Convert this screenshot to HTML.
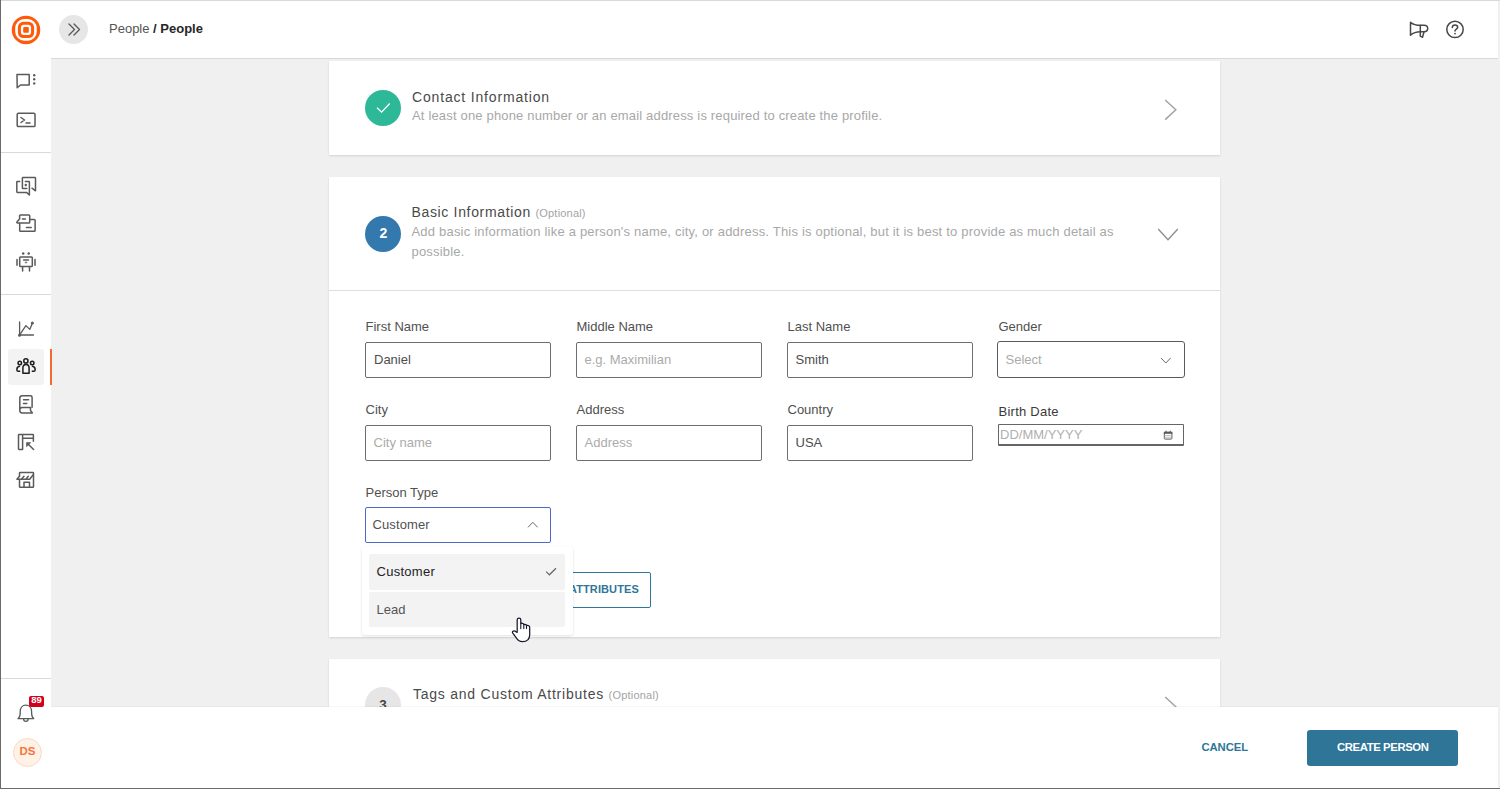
<!DOCTYPE html>
<html><head><meta charset="utf-8">
<style>
*{box-sizing:border-box;margin:0;padding:0}
html,body{width:1500px;height:789px;overflow:hidden;background:#f0f0f0;font-family:"Liberation Sans",sans-serif;position:relative}
.a{position:absolute}
.t{position:absolute;white-space:nowrap;line-height:1}
svg{position:absolute;overflow:visible}
.card{position:absolute;left:329px;width:891px;background:#fff;box-shadow:0 1px 2px rgba(0,0,0,.13)}
.lbl{position:absolute;white-space:nowrap;line-height:1;font-size:13px;color:#505050}
.inp{position:absolute;width:186px;height:36px;border:1px solid #6e6e6e;border-radius:2px;background:#fff}
.val{position:absolute;white-space:nowrap;line-height:1;font-size:13px;color:#4d4d4d}
.ph{position:absolute;white-space:nowrap;line-height:1;font-size:13px;color:#ababab}
</style></head>
<body>
<!-- header -->
<div class="a" style="left:0;top:0;width:1500px;height:58px;background:#fff"></div>
<div class="a" style="left:51px;top:58px;width:1449px;height:1px;background:#d9d8d6"></div>
<div class="a" style="left:59px;top:15px;width:29px;height:29px;border-radius:50%;background:#e6e6e6"></div>
<svg width="1500" height="60" style="left:0;top:0">
 <g fill="none" stroke="#555" stroke-width="1.3" stroke-linecap="round" stroke-linejoin="round">
  <path d="M69 24 L74.5 29.5 L69 35"/><path d="M74 24 L79.5 29.5 L74 35"/>
 </g>
 <g fill="none" stroke="#484848" stroke-width="1.5" stroke-linecap="round" stroke-linejoin="round">
  <path d="M1410.5 22.3 C1413 24.3 1416 25.3 1420.5 25.3 L1424 25.3 C1426.5 25.3 1427.7 26.9 1427.7 28.5 C1427.7 30.1 1426.5 31.7 1424 31.7 L1420.5 31.7 C1416 31.7 1413 32.9 1410.5 35.2 Z"/>
  <path d="M1420.3 25.5 L1420.3 36.2 L1422.5 37.3 L1423.9 32.2"/>
  <circle cx="1455" cy="29.4" r="8.2"/>
  <path d="M1452.3 27.6 C1452.3 26 1453.5 25 1455 25 C1456.6 25 1457.7 26 1457.7 27.3 C1457.7 29 1455 29.2 1455 31"/>
 </g>
 <circle cx="1455" cy="33.6" r="0.9" fill="#484848"/>
</svg>
<div class="t" style="left:109px;top:21.5px;font-size:13px;color:#555">People <b style="color:#262626">/ People</b></div>

<!-- cards -->
<div class="card" style="top:61px;height:94px"></div>
<div class="a" style="left:365px;top:90px;width:36px;height:36px;border-radius:50%;background:#2db897"></div>
<svg width="40" height="40" style="left:365px;top:90px"><path d="M12 17.7 L16.6 22.1 L24.7 13.5" fill="none" stroke="#fff" stroke-width="1.3"/></svg>
<div class="t" style="left:412px;top:90px;font-size:14px;letter-spacing:0.83px;color:#4a4a4a">Contact Information</div>
<div class="t" style="left:412px;top:109px;font-size:13px;letter-spacing:0.17px;color:#a8a8a8">At least one phone number or an email address is required to create the profile.</div>
<svg width="20" height="24" style="left:1160px;top:96px"><path d="M5.2 4 L15.8 13.8 L5.2 23.6" fill="none" stroke="#a3a3a3" stroke-width="1.5"/></svg>

<div class="card" style="top:177px;height:460px"></div>
<div class="a" style="left:365px;top:216px;width:36px;height:36px;border-radius:50%;background:#3479ae"></div>
<div class="t" style="left:365.3px;top:226.2px;width:36px;text-align:center;font-size:14px;font-weight:bold;color:#fff">2</div>
<div class="t" style="left:411.5px;top:205.2px;font-size:14px;letter-spacing:0.66px;color:#4a4a4a">Basic Information <span style="font-size:11px;letter-spacing:0.2px;color:#a3a3a3">(Optional)</span></div>
<div class="t" style="left:411.5px;top:225px;font-size:13px;letter-spacing:0.2px;color:#a8a8a8">Add basic information like a person's name, city, or address. This is optional, but it is best to provide as much detail as</div>
<div class="t" style="left:411.5px;top:245px;font-size:13px;letter-spacing:0.2px;color:#a8a8a8">possible.</div>
<svg width="30" height="20" style="left:1155px;top:225px"><path d="M3.2 4 L13 14.8 L22.8 4" fill="none" stroke="#8f8f8f" stroke-width="1.4"/></svg>
<div class="a" style="left:329px;top:290px;width:891px;height:1px;background:#dedede"></div>

<!-- row 1 -->
<div class="lbl" style="left:365.5px;top:319.6px">First Name</div>
<div class="inp" style="left:365px;top:342px"></div>
<div class="val" style="left:374px;top:352.7px">Daniel</div>
<div class="lbl" style="left:576.5px;top:319.6px">Middle Name</div>
<div class="inp" style="left:576px;top:342px"></div>
<div class="ph" style="left:584.5px;top:352.7px">e.g. Maximilian</div>
<div class="lbl" style="left:787.5px;top:319.6px">Last Name</div>
<div class="inp" style="left:787px;top:342px"></div>
<div class="val" style="left:795.5px;top:352.7px">Smith</div>
<div class="lbl" style="left:998.5px;top:319.6px">Gender</div>
<div class="inp" style="left:997px;top:341px;width:188px;height:37px;border-radius:3px;border-color:#5a5a5a"></div>
<div class="ph" style="left:1005.5px;top:353px">Select</div>
<svg width="20" height="12" style="left:1158px;top:355px"><path d="M3 3 L7.8 8 L12.6 3" fill="none" stroke="#666" stroke-width="1"/></svg>

<!-- row 2 -->
<div class="lbl" style="left:365.5px;top:403.2px">City</div>
<div class="inp" style="left:365px;top:425px"></div>
<div class="ph" style="left:373.5px;top:435.9px">City name</div>
<div class="lbl" style="left:576.5px;top:403.2px">Address</div>
<div class="inp" style="left:576px;top:425px"></div>
<div class="ph" style="left:584.5px;top:435.9px">Address</div>
<div class="lbl" style="left:787.5px;top:403.2px">Country</div>
<div class="inp" style="left:787px;top:425px"></div>
<div class="val" style="left:795.5px;top:435.9px">USA</div>
<div class="lbl" style="left:998.5px;top:404.5px;color:#3a3a3a;letter-spacing:0.25px">Birth Date</div>
<div class="a" style="left:998px;top:424px;width:186px;height:22px;border:1px solid #666;border-bottom-width:2px;border-radius:1px;background:#fff"></div>
<div class="ph" style="left:1000px;top:428.3px;color:#b0b0b0">DD/MM/YYYY</div>
<svg width="12" height="12" style="left:1163px;top:430px"><rect x="1.3" y="2.3" width="7.6" height="6.8" rx="0.8" fill="none" stroke="#5a5a5a" stroke-width="1"/><rect x="0.8" y="1.8" width="8.6" height="2" fill="#5a5a5a"/><path d="M3 0.8 V2.2 M7.2 0.8 V2.2" stroke="#5a5a5a" stroke-width="1.1"/><path d="M1.5 5.6 H8.7 M1.5 7.3 H8.7" stroke="#aaa" stroke-width="0.7"/></svg>

<!-- person type -->
<div class="lbl" style="left:365.5px;top:485.7px">Person Type</div>
<div class="a" style="left:365px;top:507px;width:186px;height:36px;border:1px solid #4d68c9;border-radius:2px;background:#fff"></div>
<div class="val" style="left:372.5px;top:517.9px;color:#525252;letter-spacing:0.1px">Customer</div>
<svg width="16" height="10" style="left:525px;top:519px"><path d="M3 8.3 L7.8 3.3 L12.6 8.3" fill="none" stroke="#666" stroke-width="1"/></svg>

<!-- add attributes button -->
<div class="a" style="left:365px;top:572px;width:286px;height:36px;border:1px solid #2f7699;border-radius:2px"></div>
<div class="t" style="left:569px;top:584px;font-size:11px;font-weight:bold;letter-spacing:0.1px;color:#2f7699">ATTRIBUTES</div>

<!-- dropdown -->
<div class="a" style="left:362px;top:547px;width:211px;height:88px;background:#fff;border-radius:3px;box-shadow:0 1px 3px rgba(0,0,0,.12)"></div>
<div class="a" style="left:369px;top:554px;width:196px;height:36px;background:#f3f3f3;border-radius:2px"></div>
<div class="a" style="left:369px;top:592px;width:196px;height:35px;background:#f3f3f3;border-radius:2px"></div>
<div class="t" style="left:376.5px;top:565.2px;font-size:13px;letter-spacing:0.28px;color:#222">Customer</div>
<svg width="14" height="10" style="left:545px;top:567px"><path d="M1.2 4.6 L4.4 7.8 L11 1.3" fill="none" stroke="#666" stroke-width="1.2"/></svg>
<div class="t" style="left:376.5px;top:603.2px;font-size:13px;color:#555">Lead</div>

<!-- card 3 -->
<div class="card" style="top:659px;height:80px"></div>
<div class="a" style="left:365px;top:687px;width:36px;height:36px;border-radius:50%;background:#e6e6e6"></div>
<div class="t" style="left:365px;top:697.5px;width:36px;text-align:center;font-size:13.5px;font-weight:bold;color:#444">3</div>
<div class="t" style="left:413px;top:687px;font-size:14px;letter-spacing:0.76px;color:#4a4a4a">Tags and Custom Attributes <span style="font-size:11px;letter-spacing:0.2px;color:#a3a3a3">(Optional)</span></div>
<svg width="20" height="24" style="left:1160px;top:693px"><path d="M5.2 4 L15.8 13.8 L5.2 23.6" fill="none" stroke="#a3a3a3" stroke-width="1.5"/></svg>

<!-- footer -->
<div class="a" style="left:51px;top:707px;width:1449px;height:82px;background:#fff;box-shadow:0 -1px 0 rgba(0,0,0,.03)"></div>
<div class="t" style="left:1201.5px;top:741.5px;font-size:11.3px;font-weight:bold;letter-spacing:-0.1px;color:#2f7699">CANCEL</div>
<div class="a" style="left:1307px;top:730px;width:151px;height:36px;background:#2e7597;border-radius:3px"></div>
<div class="t" style="left:1337px;top:741.5px;font-size:11.3px;font-weight:bold;letter-spacing:-0.38px;color:#fff">CREATE PERSON</div>

<!-- sidebar -->
<div class="a" style="left:0;top:0;width:51px;height:789px;background:#fff"></div>
<div class="a" style="left:1px;top:152px;width:50px;height:1px;background:#dad9d7"></div>
<div class="a" style="left:1px;top:294px;width:50px;height:1px;background:#dad9d7"></div>
<div class="a" style="left:1px;top:678px;width:50px;height:1px;background:#dad9d7"></div>
<div class="a" style="left:8px;top:349px;width:36px;height:36px;background:#f3f3f3;border-radius:3px"></div>
<div class="a" style="left:50px;top:349px;width:1.5px;height:36px;background:#f26a2e"></div>
<svg width="51" height="789" style="left:0;top:0">
 <!-- logo -->
 <circle cx="26" cy="29.9" r="14.25" fill="#ff5a0a"/>
 <rect x="15.2" y="19.1" width="21.6" height="21.6" rx="9" fill="#fff"/>
 <rect x="17.9" y="21.8" width="16.2" height="16.2" rx="5.5" fill="#ff5a0a"/>
 <rect x="20.9" y="24.8" width="10.2" height="10.2" rx="3" fill="#fff"/>
 <rect x="23.2" y="27.1" width="5.6" height="5.6" rx="1" fill="#ff5a0a"/>
 <g fill="none" stroke="#5a5a5a" stroke-width="1.5" stroke-linecap="round" stroke-linejoin="round">
  <!-- chat -->
  <path d="M17 74.5 H29.2 V85 H20.5 L17.2 87.8 Z"/>
  <!-- terminal -->
  <rect x="17.2" y="113.2" width="17.8" height="13.4" rx="1.2"/>
  <path d="M21 117.5 L24.5 120 L21 122.5 M26 123 H30"/>
  <!-- chats -->
  <path d="M19.7 181.4 H17.4 C17 181.4 16.8 181.6 16.8 182 V191.8 C16.8 192.2 17 192.4 17.4 192.4 H26.5 L29.4 195 V182 C29.4 181.6 29.2 181.4 28.8 181.4 H25.4"/>
  <path d="M26.8 188.5 H23 C22.6 188.5 22.4 188.3 22.4 187.9 V178.2 C22.4 177.8 22.6 177.6 23 177.6 H34.9 C35.3 177.6 35.5 177.8 35.5 178.2 V190.8 L32 188.2"/>
  <!-- folder-ish -->
  <path d="M29.7 219.4 H34.3 C34.8 219.4 35.1 219.7 35.1 220.2 V230.5 C35.1 231 34.8 231.3 34.3 231.3 H20.5 C20 231.3 19.7 231 19.7 230.5 V223.2"/>
  <path d="M19.6 219 V215.8 C19.6 215.3 19.9 215 20.4 215 H28.9 C29.4 215 29.7 215.3 29.7 215.8 V222.2 C29.7 222.7 29.4 223 28.9 223 H17.6 C16.9 223 16.6 222.4 17.1 221.8 Z"/>
  <path d="M22.4 219 H25.4 M26.4 227.5 H31.2"/>
  <!-- robot -->
  <rect x="19.7" y="256.9" width="12.6" height="9.7" rx="0.8"/>
  <path d="M17 259.6 V265.3 M35 259.6 V265.3 M22.6 266.8 V271 M29.5 266.8 V271 M23.6 259.9 H28.5"/>
  <!-- chart -->
  <path d="M19.6 322 V335 H33.5" stroke-width="1.3"/>
  <path d="M19.5 335.2 L25.9 325.6 L29.8 329.4 L32.4 322.9" stroke-width="1.3"/>
  <!-- book -->
  <path d="M32.1 407.3 V397.4 C32.1 396.4 31.5 395.8 30.5 395.8 H22.2 C20.8 395.8 19.8 396.8 19.8 398.2 V410.5 C19.8 412 20.8 412.9 22.2 412.9 H32.4 L30.5 410.6 V407.4 H22.2 C20.8 407.4 19.8 408.5 19.8 410"/>
  <path d="M23.5 399.8 H28.6 M23.5 403.6 H26.8"/>
  <!-- layout -->
  <path d="M33.4 441.3 V435.2 C33.4 434.8 33.2 434.6 32.8 434.6 H19.1 C18.7 434.6 18.5 434.8 18.5 435.2 V448.8 C18.5 449.2 18.7 449.4 19.1 449.4 H22.6 V434.6 M22.6 438.2 H33.4 M28.5 444.5 L33.6 449.5"/>
  <!-- store -->
  <path d="M19.5 476.3 V473.1 C19.5 472.7 19.7 472.5 20.1 472.5 H32.9 C33.3 472.5 33.5 472.7 33.5 473.1 V486.7 C33.5 487.1 33.3 487.3 32.9 487.3 H20.1 C19.7 487.3 19.5 487.1 19.5 486.7 V479.6"/>
  <path d="M16.9 479.2 H29.7 L33.2 474.8 M16.9 479.2 L19.5 476.3 M24 476.3 L21.3 479.2 M28.3 476.3 L25.8 479.2 M24 487.3 V482.3 H29.5 V487.3"/>
  <!-- bell -->
  <path d="M18 718.7 C19.5 717.6 20.2 716.4 20.2 713 V711.5 C20.2 707.6 22.6 705.2 25.8 705.2 C29 705.2 31.6 707.6 31.6 711.5 V713 C31.6 716.4 32.3 717.6 33.8 718.7 Z" stroke-width="1.3"/>
  <path d="M23.6 719 C23.6 722.2 28.2 722.2 28.2 719" stroke-width="1.3"/>
 </g>
 <g fill="#222" stroke="none">
 </g>
 <circle cx="34.2" cy="75.2" r="1.2" fill="#5a5a5a"/>
 <circle cx="34.2" cy="79.2" r="1.2" fill="#5a5a5a"/>
 <circle cx="34.2" cy="83.4" r="1.2" fill="#5a5a5a"/>
 <circle cx="25.8" cy="185" r="1.2" fill="#5a5a5a"/>
 <circle cx="23.2" cy="253.5" r="1.25" fill="#5a5a5a"/><circle cx="28.7" cy="253.5" r="1.25" fill="#5a5a5a"/>
 <path d="M24.9 262.2 H27.1 L26 263.3 Z" fill="#5a5a5a" stroke="#5a5a5a" stroke-width="0.6"/>
 <circle cx="19.5" cy="335.2" r="1.5" fill="#5a5a5a"/><circle cx="32.4" cy="322.9" r="1.5" fill="#5a5a5a"/>
 <path d="M26.2 442.2 H31.4 L26.2 447.3 Z" fill="#5a5a5a"/>
</svg>
<!-- people icon active -->
<svg width="51" height="40" style="left:0;top:349px">
 <g fill="none" stroke="#1c1c1c" stroke-width="1.5" stroke-linecap="round" stroke-linejoin="round">
  <circle cx="25.9" cy="11.9" r="2.1"/>
  <path d="M22.9 24.2 V19 C22.9 16.8 24.2 15.4 26 15.4 C27.8 15.4 29.1 16.8 29.1 19 V24.2 Z"/>
  <circle cx="19.8" cy="14.1" r="1.75"/>
  <path d="M19.6 17.2 C17.9 17.4 16.9 18.5 16.9 20.2 V20.9 C16.9 21.7 17.5 22.2 18.3 22.2 H19.7"/>
  <circle cx="32.2" cy="14.1" r="1.75"/>
  <path d="M32.4 17.2 C34.1 17.4 35.1 18.5 35.1 20.2 V20.9 C35.1 21.7 34.5 22.2 33.7 22.2 H32.3"/>
 </g>
</svg>
<!-- badge -->
<div class="a" style="left:29px;top:696px;width:15px;height:11px;background:#d0021b;border-radius:2px"></div>
<div class="t" style="left:29px;top:695.3px;width:15px;text-align:center;font-size:9.5px;font-weight:bold;color:#fff">89</div>
<!-- avatar -->
<div class="a" style="left:13px;top:738px;width:29px;height:29px;border-radius:50%;background:#fff1e6;border:1px solid #fbd9c2"></div>
<div class="t" style="left:13px;top:746px;width:29px;text-align:center;font-size:11.5px;font-weight:bold;color:#f4743a">DS</div>

<!-- frame -->
<div class="a" style="left:0;top:0;width:1500px;height:1px;background:#d8d9db"></div>
<div class="a" style="left:0;top:0;width:1px;height:789px;background:#6a6a6a"></div>
<div class="a" style="left:0;top:788px;width:1500px;height:1px;background:#6a6a6a"></div>
<div class="a" style="left:1498px;top:1px;width:2px;height:787px;background:#f0f0f0"></div>

<!-- cursor -->
<svg width="40" height="40" style="left:500px;top:610px">
 <path d="M17.2 22.3 V9.8 C17.2 8.7 18 8 19 8 C20 8 20.8 8.7 20.8 9.8 V13.5 C21.3 13.2 22 13.2 22.6 13.4 C23.3 13.6 23.8 14.1 23.8 14.6 C24.3 14.3 25.2 14.3 25.8 14.6 C26.3 14.9 26.5 15.3 26.5 15.6 C27 15.3 28 15.3 28.8 15.7 C29.4 16.1 29.7 16.6 29.7 17.4 V24.8 C29.7 29.2 26.8 31.7 22.3 31.7 C19.5 31.7 17.8 30.2 16.5 28.2 L12.8 23.2 C12.1 22.2 12.4 21.4 13.3 21.1 C14.3 20.8 15.3 21.2 16 21.9 Z" fill="#fff" stroke="#161b2a" stroke-width="1.25" stroke-linejoin="round"/>
 <path d="M20.8 13.5 V18.6 M23.8 14.6 V18.6 M26.5 15.6 V18.6" fill="none" stroke="#161b2a" stroke-width="1.1" stroke-linecap="round"/>
</svg>
</body></html>
